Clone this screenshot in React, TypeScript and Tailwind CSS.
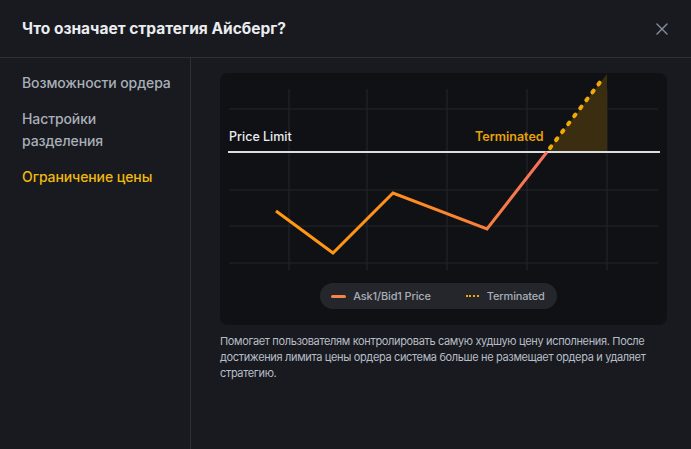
import { X } from "lucide-react";

const menu = [
  { label: "Возможности ордера", active: false },
  { label: "Настройки разделения", active: false },
  { label: "Ограничение цены", active: true },
];

function Chart() {
  const hLines = [36, 117, 153, 190];
  const vLines = [69, 147, 227, 307, 387];
  return (
    <svg width="447" height="210" viewBox="0 0 447 210" className="block">
      <defs>
        <linearGradient id="price" gradientUnits="userSpaceOnUse" x1="56" y1="0" x2="327" y2="0">
          <stop offset="0" stopColor="#FF9A12" />
          <stop offset="0.45" stopColor="#FF8F1A" />
          <stop offset="0.75" stopColor="#F97F3C" />
          <stop offset="1" stopColor="#F6705E" />
        </linearGradient>
      </defs>
      {hLines.map((y) => (
        <line key={y} x1="9" x2="438" y1={y} y2={y} stroke="#24262b" strokeWidth="1.2" />
      ))}
      {vLines.map((x) => (
        <line key={x} x1={x} x2={x} y1="16" y2="197" stroke="#24262b" strokeWidth="1.2" />
      ))}
      <path d="M327 79 L387 1 L387 79 Z" fill="#3a2d10" />
      <line x1="8" x2="440" y1="79" y2="79" stroke="#dcdde0" strokeWidth="2" />
      <text x="9" y="68" fill="#EAECEF" fontSize="12.5" fontWeight="500" fontFamily="Inter, sans-serif">
        Price Limit
      </text>
      <text x="255" y="68" fill="#E8A20A" fontSize="12.5" fontWeight="600" fontFamily="Inter, sans-serif">
        Terminated
      </text>
      <path
        d="M56 138 L113 180 L173 120 L267 156 L327 79"
        fill="none"
        stroke="url(#price)"
        strokeWidth="3"
        strokeLinejoin="miter"
      />
      <line
        x1="330"
        y1="75"
        x2="384"
        y2="4"
        stroke="#EFA90B"
        strokeWidth="4"
        strokeLinecap="round"
        strokeDasharray="2 8"
      />
    </svg>
  );
}

export default function App() {
  return (
    <div className="w-[691px] h-[449px] bg-[#181A20] flex flex-col overflow-hidden font-['Inter',sans-serif]">
      {/* Header */}
      <div className="h-[58px] shrink-0 flex items-center justify-between pl-[22px] pr-[19px] border-b border-[#2B3139]">
        <h1 className="text-[15.5px] font-bold text-[#EAECEF]">Что означает стратегия Айсберг?</h1>
        <X size={20} strokeWidth={1.6} className="text-[#848E9C]" />
      </div>

      <div className="flex flex-1 min-h-0">
        {/* Sidebar */}
        <div className="w-[191px] shrink-0 border-r border-[#2B3139] pl-[22px] pr-3 pt-[14px] flex flex-col gap-[14px]">
          {menu.map((item) => (
            <div
              key={item.label}
              className={
                item.active
                  ? "text-[14px] leading-[22px] font-medium text-[#F0B90B] tracking-[-0.1px]"
                  : "text-[14px] leading-[22px] font-medium text-[#A9AFB8] tracking-[-0.1px]"
              }
            >
              {item.label}
            </div>
          ))}
        </div>

        {/* Content */}
        <div className="flex-1 pl-[29px] pr-6 pt-[15px]">
          <div className="w-[447px] h-[252px] rounded-lg bg-[#101114] flex flex-col items-center">
            <Chart />
            <div className="mr-[10px] h-[26px] rounded-full bg-[#24262B] flex items-center pl-[11px] pr-3 text-[11px] tracking-[-0.15px] text-[#A8AEB7] font-medium">
              <span className="w-[15px] h-[3px] rounded-sm bg-[#F5834A]" />
              <span className="ml-[7px]">Ask1/Bid1 Price</span>
              <span className="ml-[35px] w-[13px] border-t-2 border-dotted border-[#EFA90B]" />
              <span className="ml-[8px]">Terminated</span>
            </div>
          </div>
          <p className="mt-2 w-[450px] text-[11px] leading-4 tracking-[-0.35px] text-[#B7BDC6]">
            Помогает пользователям контролировать самую худшую цену исполнения. После достижения лимита цены ордера
            система больше не размещает ордера и удаляет стратегию.
          </p>
        </div>
      </div>
    </div>
  );
}
